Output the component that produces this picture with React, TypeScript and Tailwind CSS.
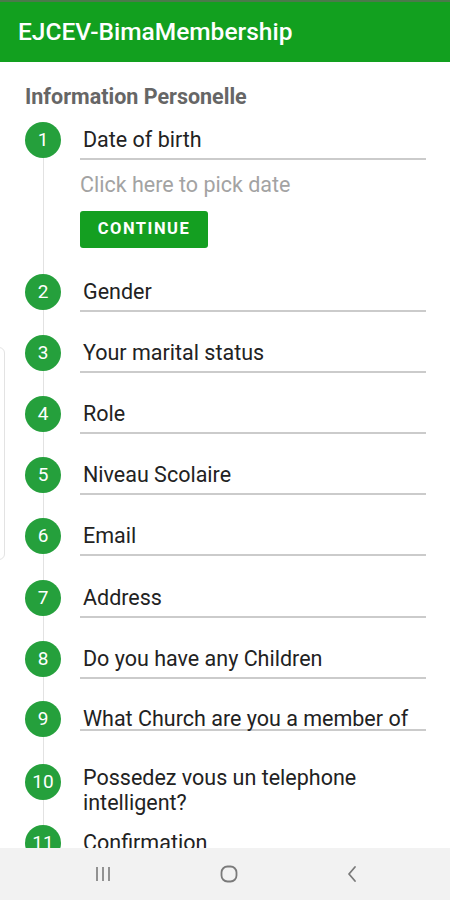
import React from 'react';

type Step = {
  n: number;
  label: string;
  rowH: string;
};

const steps: Step[] = [
  { n: 2, label: 'Gender', rowH: 'h-[61px]' },
  { n: 3, label: 'Your marital status', rowH: 'h-[61px]' },
  { n: 4, label: 'Role', rowH: 'h-[61px]' },
  { n: 5, label: 'Niveau Scolaire', rowH: 'h-[61px]' },
  { n: 6, label: 'Email', rowH: 'h-[62px]' },
  { n: 7, label: 'Address', rowH: 'h-[61px]' },
  { n: 8, label: 'Do you have any Children', rowH: 'h-[60px]' },
];

const Circle = ({ n }: { n: number }) => (
  <div className="w-[36px] h-[36px] shrink-0 rounded-full bg-[#25a03c] text-white flex items-center justify-center text-[19px]">
    {n}
  </div>
);

const Rail = ({ children, last }: { children: React.ReactNode; last?: boolean }) => (
  <div className="w-[36px] shrink-0 flex flex-col items-center">
    {children}
    {!last && <div className="w-px flex-1 bg-[#e2e2e2]" />}
  </div>
);

const Field = ({ label }: { label: string }) => (
  <div className="h-[38px] flex items-center pl-[3px] border-b-2 border-[#cbcbcb] text-[21.5px] text-[#222]">
    {label}
  </div>
);

const App: React.FC = () => {
  return (
    <div
      className="w-[450px] h-[900px] bg-white flex flex-col relative overflow-hidden"
      style={{ fontFamily: 'Roboto, "Noto Sans", sans-serif' }}
    >
      {/* app bar */}
      <div className="h-[62px] shrink-0 bg-[#12a01f] border-t-2 border-[#4b7a4b] flex items-center pl-[18px]">
        <span className="text-white text-[24.5px] font-medium">EJCEV-BimaMembership</span>
      </div>

      {/* stepper */}
      <div className="flex-1 overflow-hidden">
        <div className="pt-[23px] pl-[25px] text-[21.5px] leading-[24px] font-bold text-[#666]">
          Information Personelle
        </div>

        <div className="mt-[13px] pl-[25px] pr-[24px]">
          {/* step 1, open */}
          <div className="flex h-[152px]">
            <Rail>
              <Circle n={1} />
            </Rail>
            <div className="flex-1 ml-[19px]">
              <Field label="Date of birth" />
              <div className="mt-[13px] text-[21.5px] leading-[24px] text-[#a3a3a3]">Click here to pick date</div>
              <button className="mt-[14px] w-[128px] h-[37px] rounded-[3px] bg-[#149f21] text-white text-[16.5px] font-bold tracking-[1.5px]">
                CONTINUE
              </button>
            </div>
          </div>

          {steps.map((s) => (
            <div key={s.n} className={`flex ${s.rowH}`}>
              <Rail>
                <Circle n={s.n} />
              </Rail>
              <div className="flex-1 ml-[19px]">
                <Field label={s.label} />
              </div>
            </div>
          ))}

          {/* step 9 */}
          <div className="flex h-[63px]">
            <Rail>
              <Circle n={9} />
            </Rail>
            <div className="flex-1 ml-[19px]">
              <div className="h-[30px] pl-[3px] border-b-2 border-[#cbcbcb] text-[21.5px] leading-[36px] text-[#222] whitespace-nowrap">
                What Church are you a member of
              </div>
            </div>
          </div>

          {/* step 10 */}
          <div className="flex h-[61px]">
            <Rail>
              <Circle n={10} />
            </Rail>
            <div className="flex-1 ml-[19px] pl-[3px] pt-[1px] text-[21.5px] leading-[25px] text-[#222]">
              Possedez vous un telephone
              <br />
              intelligent?
            </div>
          </div>

          {/* step 11 */}
          <div className="flex h-[61px]">
            <Rail last>
              <Circle n={11} />
            </Rail>
            <div className="flex-1 ml-[19px] pl-[3px] h-[36px] flex items-center text-[21.5px] text-[#222]">
              Confirmation
            </div>
          </div>
        </div>
      </div>

      {/* system nav bar */}
      <div className="h-[52px] shrink-0 bg-[#f2f2f2] flex items-center justify-center gap-[108px] pl-[2px]">
        <svg width="18" height="16" viewBox="0 0 18 16" fill="none" stroke="#7a7a7a" strokeWidth="1.6">
          <path d="M3 1v14M9 1v14M15 1v14" />
        </svg>
        <svg width="18" height="18" viewBox="0 0 18 18" fill="none" stroke="#7a7a7a" strokeWidth="1.8">
          <rect x="1.5" y="1.5" width="15" height="15" rx="6" />
        </svg>
        <svg width="12" height="18" viewBox="0 0 12 18" fill="none" stroke="#7a7a7a" strokeWidth="1.8" strokeLinecap="round" strokeLinejoin="round">
          <path d="M9 2L3 9l6 7" />
        </svg>
      </div>

      {/* drawer edge */}
      <div className="absolute left-[-10px] top-[347px] w-[15px] h-[213px] rounded-md border border-[#e3e3e3]" />
    </div>
  );
};

export default App;
